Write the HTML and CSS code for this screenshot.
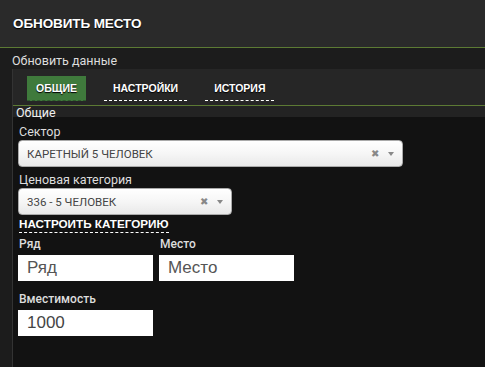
FILE: index.html
```html
<!DOCTYPE html>
<html lang="ru">
<head>
  <meta charset="UTF-8">
  <title>Обновить место</title>
  <link rel="stylesheet" href="styles.css">
</head>
<body>
  <header class="topbar">
    <h1>ОБНОВИТЬ МЕСТО</h1>
  </header>
  <section class="page">
    <div class="page-title">Обновить данные</div>
    <div class="panel">
      <nav class="tabs">
        <a class="tab active" href="#">ОБЩИЕ</a>
        <a class="tab" href="#">НАСТРОЙКИ</a>
        <a class="tab" href="#">ИСТОРИЯ</a>
      </nav>
      <div class="subhead">Общие</div>
      <form class="content">
        <label class="field-label first">Сектор</label>
        <div class="select wide">
          <span class="select-value">КАРЕТНЫЙ 5 ЧЕЛОВЕК</span>
          <span class="select-clear">&#x2716;</span>
          <span class="select-arrow"></span>
        </div>
        <label class="field-label">Ценовая категория</label>
        <div class="select narrow">
          <span class="select-value">336 - 5 ЧЕЛОВЕК</span>
          <span class="select-clear">&#x2716;</span>
          <span class="select-arrow"></span>
        </div>
        <a class="link" href="#">НАСТРОИТЬ КАТЕГОРИЮ</a>
        <div class="row">
          <div class="col">
            <label class="small-label">Ряд</label>
            <input type="text" placeholder="Ряд">
          </div>
          <div class="col">
            <label class="small-label">Место</label>
            <input type="text" placeholder="Место">
          </div>
        </div>
        <div class="col capacity">
          <label class="small-label">Вместимость</label>
          <input type="text" value="1000">
        </div>
      </form>
    </div>
  </section>
</body>
</html>
```

FILE: styles.css
```css
body {
  margin: 0;
  background-color: #181818;
  font-family: Roboto, "Liberation Sans", Arial, sans-serif;
  color: #ddd;
  height: 367px;
  overflow: hidden;
}

.topbar {
  height: 47px;
  background-color: #2a2a2a;
  border-bottom: 1px solid #5c7a34;
  display: flex;
  align-items: center;
  padding-left: 13px;
}

.topbar h1 {
  margin: 0;
  font-family: "Liberation Sans", Arial, sans-serif;
  font-size: 13.5px;
  font-weight: bold;
  color: #fff;
  letter-spacing: -0.1px;
  text-shadow: 0 1px 1px #000;
}

.page {
  background-color: #1c1c1c;
  padding-left: 12px;
}

.page-title {
  height: 21px;
  font-size: 12.5px;
  line-height: 26px;
  color: #ddd;
}

.panel {
  border-left: 1px solid #333;
  background-color: #121212;
  height: 300px;
}

.tabs {
  display: flex;
  align-items: flex-start;
  gap: 18px;
  height: 29px;
  padding: 7px 0 0 14px;
  background-color: #262626;
  border-bottom: 1px solid #5c7a34;
}

.tab {
  font-family: "Liberation Sans", Arial, sans-serif;
  font-size: 10.5px;
  font-weight: bold;
  line-height: 13px;
  color: #fff;
  text-decoration: none;
  padding: 6px 9px 5px;
  border-bottom: 1px dashed #fff;
  text-shadow: 0 1px 1px #000;
}

.tab.active {
  background-color: #3f7a3c;
  border-bottom-color: #2d5a2b;
}

.subhead {
  height: 11px;
  font-size: 12.5px;
  line-height: 14px;
  padding-left: 3px;
  background-color: #232323;
  color: #eee;
}

.content {
  padding-left: 5px;
  display: flex;
  flex-direction: column;
  align-items: flex-start;
}

.field-label {
  font-size: 12.5px;
  color: #ddd;
  line-height: 14px;
  margin: 6px 0 1px 1px;
}

.field-label.first {
  margin-top: 8px;
}

.select {
  display: flex;
  align-items: center;
  height: 27px;
  box-sizing: border-box;
  border: 1px solid #aaa;
  border-radius: 4px;
  background: linear-gradient(#fff 0%, #f6f6f6 50%, #e9e9e9 100%);
  padding: 0 8px;
}

.select.wide { width: 385px; }
.select.narrow { width: 214px; }

.select-value {
  flex: 1;
  font-size: 11.5px;
  color: #444;
}

.select-clear {
  font-size: 10px;
  color: #888;
  margin-right: 9px;
}

.select-arrow {
  width: 0;
  height: 0;
  border-left: 3px solid transparent;
  border-right: 3px solid transparent;
  border-top: 4px solid #888;
}

.link {
  font-family: "Liberation Sans", Arial, sans-serif;
  font-size: 11.7px;
  font-weight: bold;
  color: #fff;
  text-decoration: none;
  border-bottom: 1px dashed #fff;
  margin: 2px 0 0 1px;
  padding-bottom: 1px;
  line-height: 14px;
}

.row {
  display: flex;
  gap: 6px;
  margin-top: 4px;
}

.col {
  display: flex;
  flex-direction: column;
}

.capacity {
  margin-top: 11px;
}

.small-label {
  font-size: 12px;
  font-weight: 500;
  line-height: 14px;
  color: #ddd;
  margin: 0 0 4px 1px;
}

input {
  width: 135px;
  height: 26px;
  box-sizing: border-box;
  border: none;
  padding: 0 9px;
  font-family: "Liberation Sans", Arial, sans-serif;
  font-size: 17px;
  color: #444;
  background-color: #fff;
}

input::placeholder {
  color: #555;
}
```
